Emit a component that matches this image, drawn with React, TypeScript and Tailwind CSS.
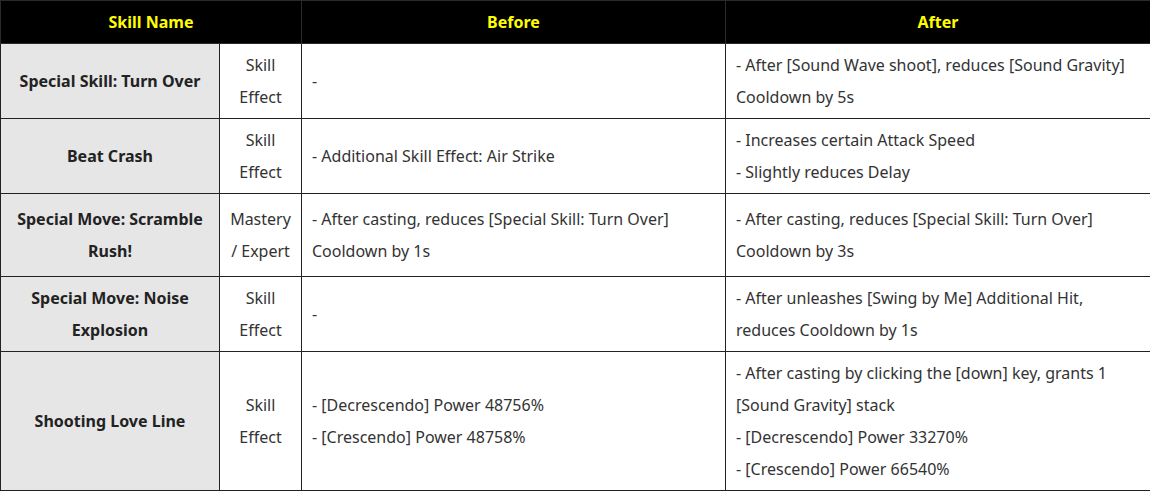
import React from 'react';

type Row = {
  name: string[];
  type: string[];
  before: string[];
  after: string[];
  h: string;
};

const rows: Row[] = [
  {
    name: ['Special Skill: Turn Over'],
    type: ['Skill', 'Effect'],
    before: ['-'],
    after: ['- After [Sound Wave shoot], reduces [Sound Gravity]', 'Cooldown by 5s'],
    h: 'h-[75px]',
  },
  {
    name: ['Beat Crash'],
    type: ['Skill', 'Effect'],
    before: ['- Additional Skill Effect: Air Strike'],
    after: ['- Increases certain Attack Speed', '- Slightly reduces Delay'],
    h: 'h-[75px]',
  },
  {
    name: ['Special Move: Scramble', 'Rush!'],
    type: ['Mastery', '/ Expert'],
    before: ['- After casting, reduces [Special Skill: Turn Over]', 'Cooldown by 1s'],
    after: ['- After casting, reduces [Special Skill: Turn Over]', 'Cooldown by 3s'],
    h: 'h-[83px]',
  },
  {
    name: ['Special Move: Noise', 'Explosion'],
    type: ['Skill', 'Effect'],
    before: ['-'],
    after: ['- After unleashes [Swing by Me] Additional Hit,', 'reduces Cooldown by 1s'],
    h: 'h-[75px]',
  },
  {
    name: ['Shooting Love Line'],
    type: ['Skill', 'Effect'],
    before: ['- [Decrescendo] Power 48756%', '- [Crescendo] Power 48758%'],
    after: [
      '- After casting by clicking the [down] key, grants 1',
      '[Sound Gravity] stack',
      '- [Decrescendo] Power 33270%',
      '- [Crescendo] Power 66540%',
    ],
    h: 'h-[139px]',
  },
];

const Lines = ({ items }: { items: string[] }) => (
  <>
    {items.map((t, i) => (
      <div key={i} className="whitespace-nowrap">{t}</div>
    ))}
  </>
);

export default function App() {
  return (
    <div className="w-[1150px] h-[491px] bg-white" style={{ fontFamily: '"Noto Sans", "Open Sans", sans-serif' }}>
      <table className="w-[1150px] border-collapse table-fixed text-[16px] leading-[32px] text-[#333]">
        <colgroup>
          <col className="w-[219px]" />
          <col className="w-[82px]" />
          <col className="w-[424px]" />
          <col className="w-[425px]" />
        </colgroup>
        <thead>
          <tr className="h-[43px] bg-black text-[#ffff00] font-bold">
            <th colSpan={2} className="border border-[#2a2a2a] text-center">Skill Name</th>
            <th className="border border-[#2a2a2a] text-center">Before</th>
            <th className="border border-[#2a2a2a] text-center">After</th>
          </tr>
        </thead>
        <tbody>
          {rows.map((r, i) => (
            <tr key={i} className={r.h}>
              <td className="border border-[#222] bg-[#e6e6e6] text-center font-bold text-[#222] px-[6px]">
                <Lines items={r.name} />
              </td>
              <td className="border border-[#222] text-center px-[2px]">
                <Lines items={r.type} />
              </td>
              <td className="border border-[#222] px-[10px]">
                <Lines items={r.before} />
              </td>
              <td className="border border-[#222] px-[10px]">
                <Lines items={r.after} />
              </td>
            </tr>
          ))}
        </tbody>
      </table>
    </div>
  );
}
